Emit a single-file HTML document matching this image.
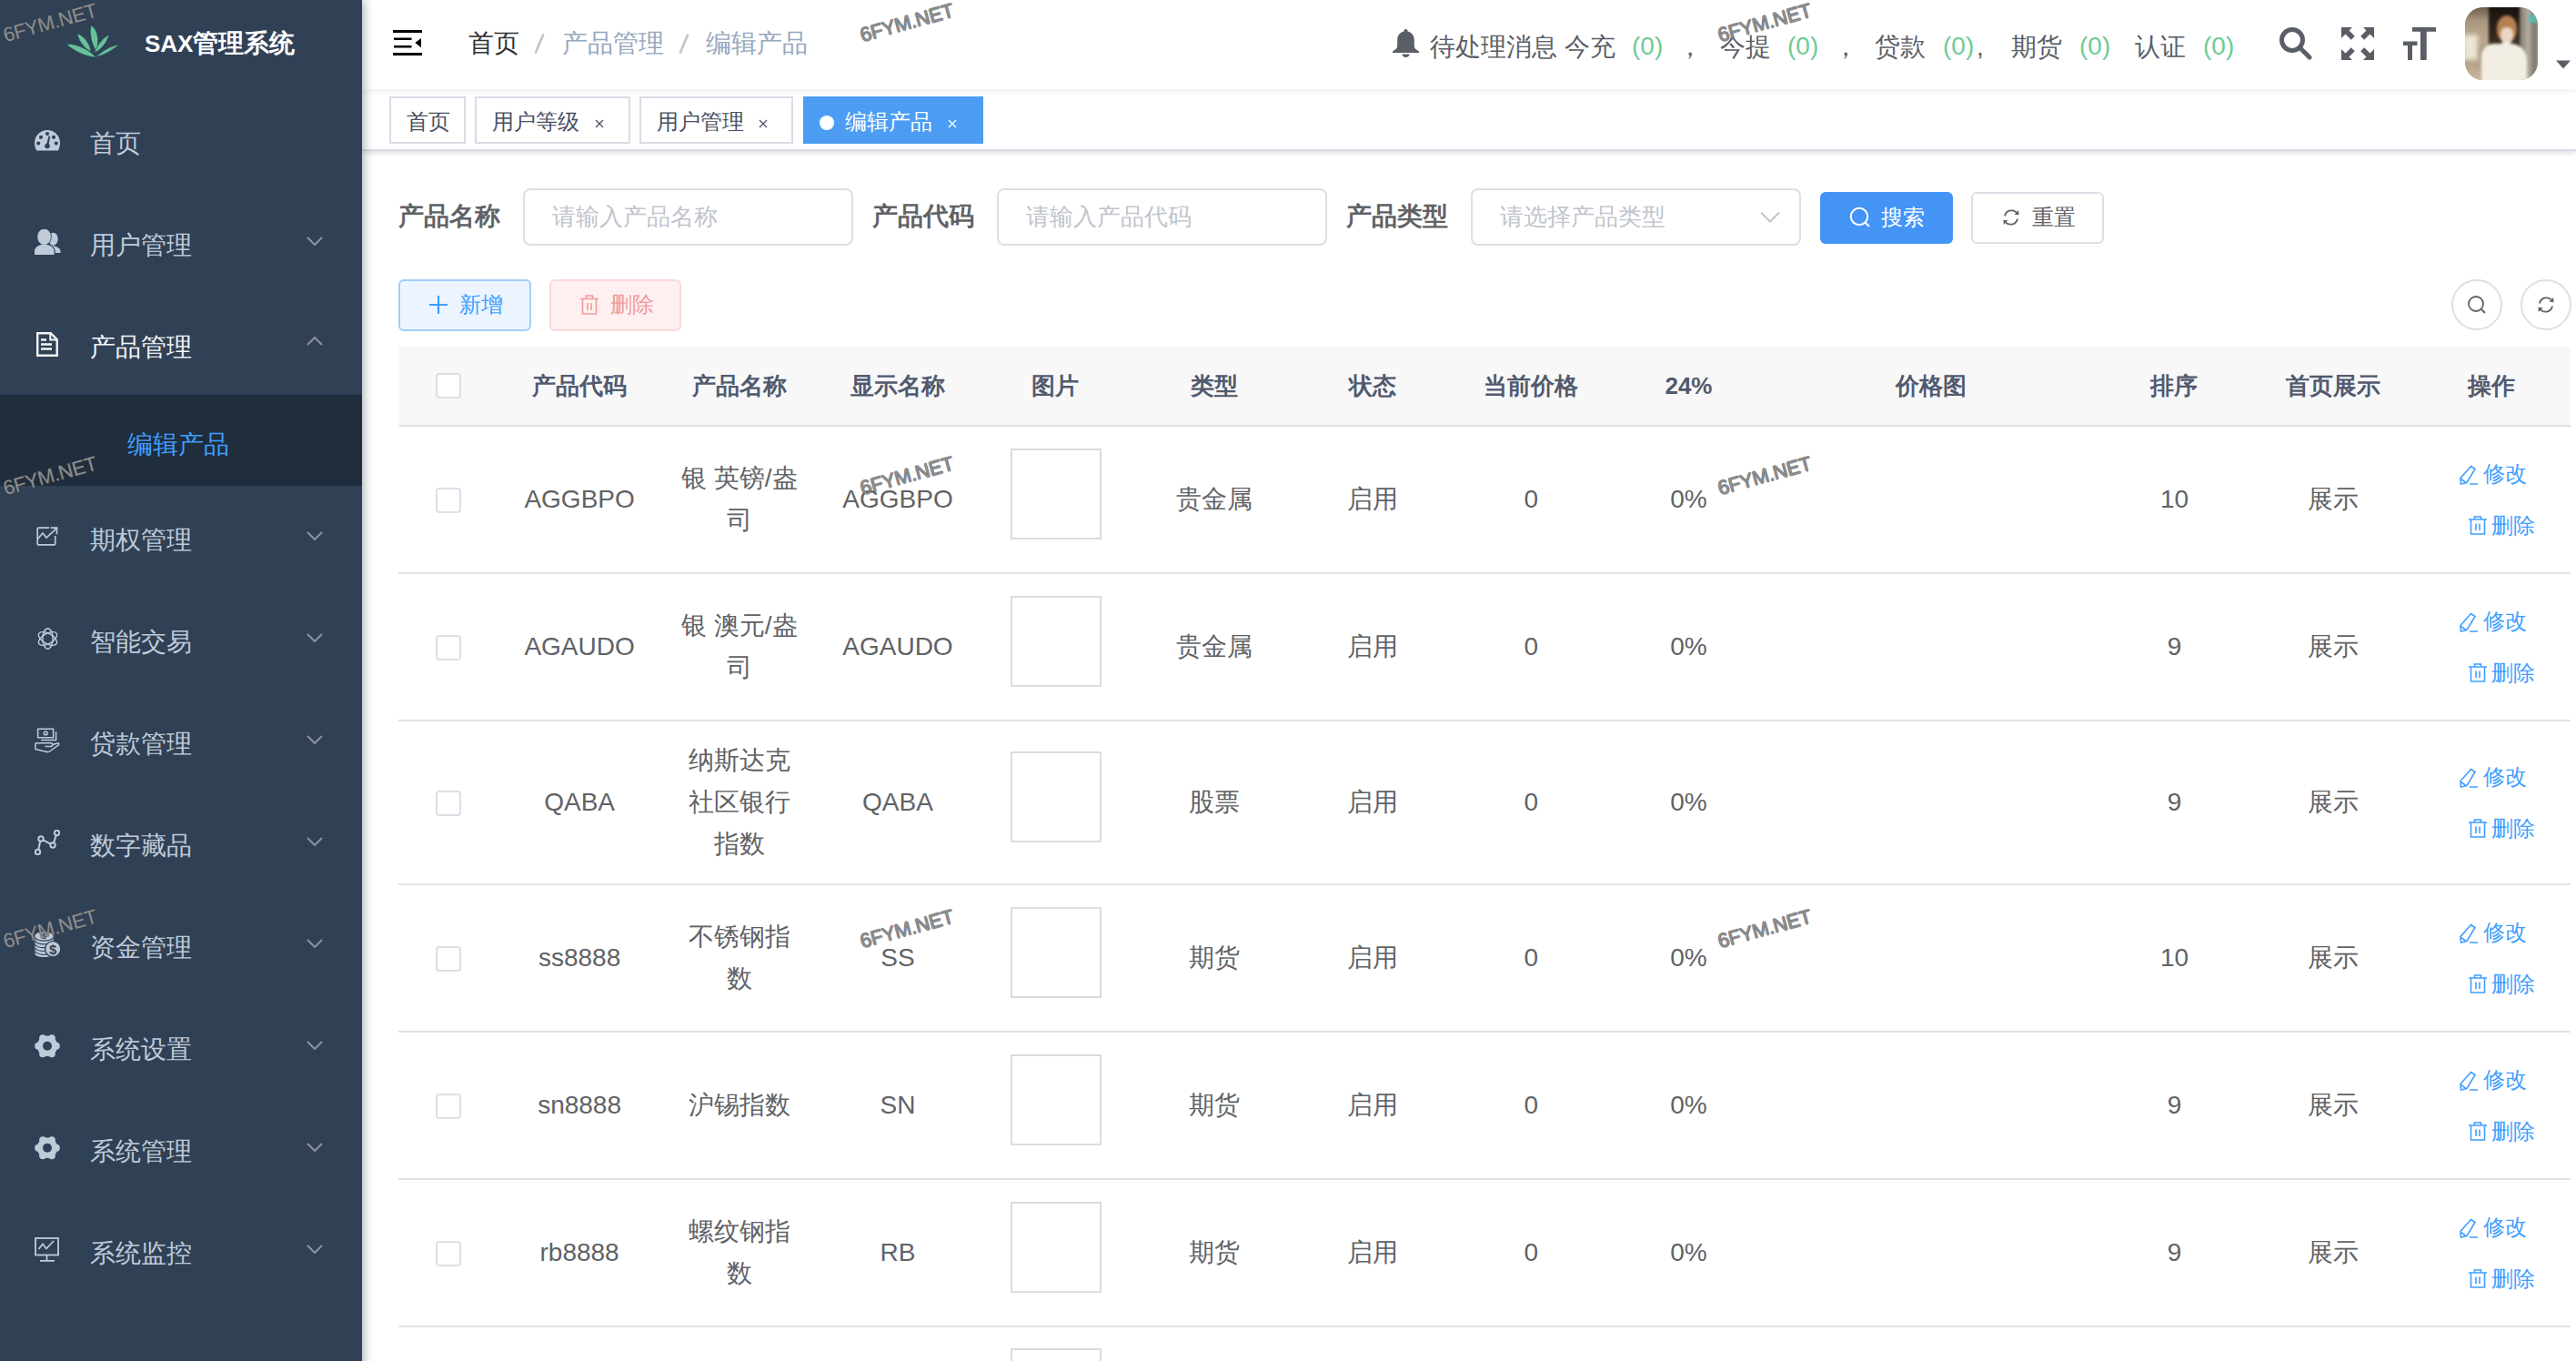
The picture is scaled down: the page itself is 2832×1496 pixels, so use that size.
<!DOCTYPE html>
<html><head><meta charset="utf-8">
<style>
*{box-sizing:border-box;margin:0;padding:0}
html,body{width:2832px;height:1496px;overflow:hidden;background:#fff;font-family:"Liberation Sans",sans-serif;position:relative}
.a{position:absolute;white-space:nowrap}
#side{position:absolute;left:0;top:0;width:398px;height:1650px;background:#304156;z-index:3;box-shadow:3px 0 10px rgba(0,21,41,.3)}
.mi{position:absolute;left:0;width:398px;height:112px}
.mt{position:absolute;left:99px;top:4px;line-height:112px;font-size:28px;color:#bfcbd9}
.ic{position:absolute}
.chev{position:absolute;left:337px;width:18px;height:10px}
#nav{position:absolute;left:398px;top:0;width:2434px;height:98px;background:#fff;box-shadow:0 2px 8px rgba(0,21,41,.08);z-index:2}
#tags{position:absolute;left:398px;top:98px;width:2434px;height:68px;background:#fff;border-bottom:2px solid #d8dce5;box-shadow:0 2px 6px 0 rgba(0,0,0,.12),0 0 6px 0 rgba(0,0,0,.04);z-index:1}
.tag{position:absolute;top:106px;height:52px;border:2px solid #d8dce5;background:#fff;color:#495060;font-size:24px;line-height:48px;padding-left:18px}
.nt{top:32px;font-size:28px;line-height:40px;color:#5a5e66;z-index:4}
.ng{top:31px;font-size:28px;line-height:40px;color:#6fcb93;z-index:4}
.tgt{top:114px;font-size:24px;line-height:40px;z-index:5}
.tgx{top:114px;font-size:24px;line-height:40px;z-index:5}
.lbl{position:absolute;font-size:28px;font-weight:bold;color:#606266;line-height:40px}
.inp{position:absolute;top:207px;height:63px;border:2px solid #dcdfe6;border-radius:8px;background:#fff}
.ph{position:absolute;font-size:26px;color:#c0c4cc;line-height:40px}
.btn{position:absolute;border-radius:6px;font-size:24px;line-height:40px}
.th{position:absolute;top:381px;height:86px;font-size:26px;font-weight:bold;color:#515a6e;text-align:center;line-height:86px}
.td{position:absolute;font-size:28px;color:#606266;text-align:center}
.hl{position:absolute;left:438px;width:2388px;height:2px;background:#e0e2e6}
.cb{position:absolute;width:28px;height:28px;border:2px solid #dcdfe6;border-radius:4px;background:#fff}
.img{position:absolute;width:100px;height:100px;border:2px solid #dcdcdc;background:#fff}
.op{position:absolute;font-size:24px;color:#409eff;line-height:40px}
.wm{position:absolute;font-size:22px;line-height:24px;letter-spacing:-0.4px;color:rgba(150,152,156,.9);text-shadow:.8px 0 0 rgba(70,70,70,.55),-.8px 0 0 rgba(70,70,70,.55),0 .8px 0 rgba(70,70,70,.55),0 -.8px 0 rgba(70,70,70,.55);transform:rotate(-15.5deg);transform-origin:0 0;z-index:10;white-space:nowrap}
</style></head><body>

<!-- SIDEBAR -->
<div id="side">
  <svg class="ic" style="left:73px;top:28px" width="58" height="36" viewBox="0 0 58 36">
    <g fill="#68c19c" stroke="#1f4a44" stroke-width="0.5">
      <path d="M0 20.5C12 19.5 26 27.5 32.5 35C22 34.5 8 28 0 20.5Z"/>
      <path d="M12 9C19.5 11.5 25.5 19.5 27 28.5C20 25.5 14 18 12 9Z"/>
      <path d="M27 0C34.5 4 36.5 16 32.8 28.5C28 20.5 25 9 27 0Z"/>
      <path d="M47 10C44.5 19 38.5 26 31 30C33.5 21.5 40 14 47 10Z"/>
      <path d="M58 21C50.5 27 42 32.5 32.5 34.5C40 27.5 49 22.5 58 21Z"/>
    </g>
  </svg>
  <div class="a" style="left:159px;top:28px;font-size:28px;font-weight:bold;color:#fff;line-height:40px"><span style="font-size:26px">SAX</span>管理系统</div>

  <div class="mi" style="top:98px">
    <svg class="ic" style="left:38px;top:45px" width="28" height="23" viewBox="0 0 28 23">
      <path fill="#bfcbd9" d="M14 0C6.3 0 0 6.3 0 14c0 3.2.8 6 2.2 8.5h23.6c1.4-2.5 2.2-5.3 2.2-8.5C28 6.3 21.7 0 14 0z"/>
      <g fill="#304156"><circle cx="14" cy="4" r="2.1"/><circle cx="7" cy="7.8" r="2.1"/><circle cx="21" cy="7.8" r="2.1"/><circle cx="4.2" cy="14.5" r="2.1"/><circle cx="23.8" cy="14.5" r="2.1"/><circle cx="14" cy="17.5" r="2.8"/><path d="M12.6 17 L15.6 6.5 L17.2 6.9 L15.2 17.6Z"/></g>
    </svg>
    <span class="mt">首页</span>
  </div>
  <div class="mi" style="top:210px">
    <svg class="ic" style="left:38px;top:42px" width="29" height="29" viewBox="0 0 29 29">
      <g fill="#bfcbd9">
        <ellipse cx="20.5" cy="10.8" rx="5.2" ry="7"/>
        <path d="M15 17.8c6.5-.3 13.5 2 13.5 6.5v1.6H18z"/>
        <g stroke="#304156" stroke-width="1.6">
        <ellipse cx="10.6" cy="8.3" rx="7.4" ry="8.6"/>
        <path d="M-0.5 28.5V24.5C-.5 19.8 4.5 16.8 10.8 16.8S22 19.8 22 24.5V28.5z"/>
        </g>
        <ellipse cx="10.6" cy="8.3" rx="7.4" ry="8.6"/>
        <path d="M0 28V24.5C0 19.8 4.5 16.8 10.8 16.8S21.5 19.8 21.5 24.5V28z"/>
      </g>
    </svg>
    <span class="mt">用户管理</span>
    <svg class="chev" style="top:50px" viewBox="0 0 18 10"><path d="M1 1L9 9L17 1" fill="none" stroke="#909399" stroke-width="2"/></svg>
  </div>
  <div class="mi" style="top:322px">
    <svg class="ic" style="left:40px;top:43px" width="24" height="27" viewBox="0 0 24 27">
      <path d="M1.2 1.2h14.5l7 7v17.6H1.2z" fill="none" stroke="#f4f4f5" stroke-width="2.4"/>
      <path d="M15.3 1.2v7.4h7.4" fill="none" stroke="#f4f4f5" stroke-width="2"/>
      <path d="M5 8.5h6M5 13.5h12M5 18.5h12" stroke="#f4f4f5" stroke-width="2.4"/>
    </svg>
    <span class="mt" style="color:#f4f4f5">产品管理</span>
    <svg class="chev" style="top:48px" viewBox="0 0 18 10"><path d="M1 9L9 1L17 9" fill="none" stroke="#909399" stroke-width="2"/></svg>
  </div>
  <div class="a" style="left:0;top:434px;width:398px;height:100px;background:#1f2d3d"></div>
  <div class="a" style="left:140px;top:439px;line-height:100px;font-size:28px;color:#409eff">编辑产品</div>

  <div class="mi" style="top:534px">
    <svg class="ic" style="left:40px;top:45px" width="24" height="21" viewBox="0 0 24 21">
      <path d="M14 1.2H2.2a1 1 0 0 0-1 1v16.6a1 1 0 0 0 1 1h17.5a1 1 0 0 0 1-1V10" fill="none" stroke="#bfcbd9" stroke-width="1.7"/>
      <path d="M1.5 13.5l5.5-6.5 4 5L22 1.8M15.5 1.2h7v7" fill="none" stroke="#bfcbd9" stroke-width="1.7"/>
    </svg>
    <span class="mt">期权管理</span>
    <svg class="chev" style="top:50px" viewBox="0 0 18 10"><path d="M1 1L9 9L17 1" fill="none" stroke="#909399" stroke-width="2"/></svg>
  </div>
  <div class="mi" style="top:646px">
    <svg class="ic" style="left:41px;top:44px" width="23" height="24" viewBox="0 0 23 24">
      <g fill="none" stroke="#bfcbd9" stroke-width="1.4">
        <ellipse cx="11.5" cy="12" rx="5.6" ry="11.2"/>
        <ellipse cx="11.5" cy="12" rx="5.6" ry="11.2" transform="rotate(60 11.5 12)"/>
        <ellipse cx="11.5" cy="12" rx="5.6" ry="11.2" transform="rotate(-60 11.5 12)"/>
      </g>
    </svg>
    <span class="mt">智能交易</span>
    <svg class="chev" style="top:50px" viewBox="0 0 18 10"><path d="M1 1L9 9L17 1" fill="none" stroke="#909399" stroke-width="2"/></svg>
  </div>
  <div class="mi" style="top:758px">
    <svg class="ic" style="left:38px;top:42px" width="28" height="28" viewBox="0 0 28 28">
      <g fill="none" stroke="#bfcbd9" stroke-width="1.5" stroke-linejoin="round">
        <rect x="3.6" y="1.3" width="17" height="9.4"/>
        <circle cx="12.2" cy="5.9" r="1.9"/>
        <path d="M7 13.6h16.6V4.2"/>
        <path d="M1 16.8h17.2c1.9 0 2.3 3.5 0 3.6H11.4"/>
        <path d="M19.4 18.4l6-1.5c1.2-.2 1.8 1 1 1.9L16.5 26c-.9.6-2 .7-3 .4L1 23.6V16.8"/>
      </g>
    </svg>
    <span class="mt">贷款管理</span>
    <svg class="chev" style="top:50px" viewBox="0 0 18 10"><path d="M1 1L9 9L17 1" fill="none" stroke="#909399" stroke-width="2"/></svg>
  </div>
  <div class="mi" style="top:870px">
    <svg class="ic" style="left:38px;top:42px" width="28" height="28" viewBox="0 0 28 28">
      <g fill="none" stroke="#bfcbd9" stroke-width="2">
        <circle cx="24.5" cy="3.5" r="2.7"/><circle cx="7" cy="10" r="2.7"/><circle cx="20" cy="17" r="2.7"/><circle cx="3.5" cy="24.5" r="2.7"/>
        <path d="M23.8 6.2L21 14.3M9.4 11.3l8.2 4.4M6.2 12.7L4.3 21.8"/>
      </g>
    </svg>
    <span class="mt">数字藏品</span>
    <svg class="chev" style="top:50px" viewBox="0 0 18 10"><path d="M1 1L9 9L17 1" fill="none" stroke="#909399" stroke-width="2"/></svg>
  </div>
  <div class="mi" style="top:982px">
    <svg class="ic" style="left:38px;top:42px" width="29" height="28" viewBox="0 0 29 28">
      <path fill="#bfcbd9" d="M0.5 4.6V24.5C0.5 26.6 5 28 10.5 28S20.5 26.6 20.5 24.5V4.6z"/>
      <ellipse cx="10.5" cy="4.6" rx="10" ry="4.4" fill="#bfcbd9"/>
      <g fill="none" stroke="#304156" stroke-width="1.2"><path d="M0.6 6.6C2.2 9.2 6 10.1 10.5 10.1S18.8 9.2 20.4 6.6"/><path d="M0.6 10.4C2.2 13.0 6 13.9 10.5 13.9S18.8 13.0 20.4 10.4"/><path d="M0.6 14.2C2.2 16.8 6 17.7 10.5 17.7S18.8 16.8 20.4 14.2"/><path d="M0.6 18C2.2 20.6 6 21.5 10.5 21.5S18.8 20.6 20.4 18"/><path d="M0.6 21.8C2.2 24.400000000000002 6 25.3 10.5 25.3S18.8 24.400000000000002 20.4 21.8"/></g>
      <text x="10.5" y="7.6" font-size="8.5" font-weight="bold" text-anchor="middle" fill="#304156" font-family="Liberation Sans">$</text>
      <circle cx="20.2" cy="19.2" r="8.6" fill="#bfcbd9" stroke="#304156" stroke-width="1.3"/>
      <text x="20.2" y="24.6" font-size="15" font-weight="bold" text-anchor="middle" fill="#304156" font-family="Liberation Sans">$</text>
    </svg>
    <span class="mt">资金管理</span>
    <svg class="chev" style="top:50px" viewBox="0 0 18 10"><path d="M1 1L9 9L17 1" fill="none" stroke="#909399" stroke-width="2"/></svg>
  </div>
  <div class="mi" style="top:1094px">
    <svg class="ic" style="left:38px;top:42px" width="28" height="28" viewBox="0 0 28 28"><g fill="#bfcbd9"><circle cx="14" cy="13.7" r="11.2"/><circle cx="23.90" cy="13.70" r="3.9"/><circle cx="18.95" cy="22.27" r="3.9"/><circle cx="9.05" cy="22.27" r="3.9"/><circle cx="4.10" cy="13.70" r="3.9"/><circle cx="9.05" cy="5.13" r="3.9"/><circle cx="18.95" cy="5.13" r="3.9"/></g><circle cx="14" cy="13.7" r="5" fill="#304156"/></svg>
    <span class="mt">系统设置</span>
    <svg class="chev" style="top:50px" viewBox="0 0 18 10"><path d="M1 1L9 9L17 1" fill="none" stroke="#909399" stroke-width="2"/></svg>
  </div>
  <div class="mi" style="top:1206px">
    <svg class="ic" style="left:38px;top:42px" width="28" height="28" viewBox="0 0 28 28"><g fill="#bfcbd9"><circle cx="14" cy="13.7" r="11.2"/><circle cx="23.90" cy="13.70" r="3.9"/><circle cx="18.95" cy="22.27" r="3.9"/><circle cx="9.05" cy="22.27" r="3.9"/><circle cx="4.10" cy="13.70" r="3.9"/><circle cx="9.05" cy="5.13" r="3.9"/><circle cx="18.95" cy="5.13" r="3.9"/></g><circle cx="14" cy="13.7" r="5" fill="#304156"/></svg>
    <span class="mt">系统管理</span>
    <svg class="chev" style="top:50px" viewBox="0 0 18 10"><path d="M1 1L9 9L17 1" fill="none" stroke="#909399" stroke-width="2"/></svg>
  </div>
  <div class="mi" style="top:1318px">
    <svg class="ic" style="left:38px;top:42px" width="27" height="27" viewBox="0 0 27 27">
      <g fill="none" stroke="#bfcbd9" stroke-width="1.8">
        <rect x="1" y="1" width="25" height="18.5"/>
        <path d="M4.5 13l4.5-5.5 4 5 8-8.5M13.5 19.5v6M6 25.8h16"/>
      </g>
    </svg>
    <span class="mt">系统监控</span>
    <svg class="chev" style="top:50px" viewBox="0 0 18 10"><path d="M1 1L9 9L17 1" fill="none" stroke="#909399" stroke-width="2"/></svg>
  </div>
</div>

<!-- NAVBAR -->
<div id="nav"></div>
<svg class="a" style="left:432px;top:33px;z-index:4" width="32" height="28" viewBox="0 0 32 28">
  <path d="M0 0h32v3H0zM1 8.4h19.5V11H1zM1 17h19.5v2.6H1zM0 25h32v3H0z" fill="#000"/>
  <path d="M31 9L24.3 14L31 19.3z" fill="#000"/>
</svg>
<div class="a" style="left:515px;top:28px;font-size:28px;line-height:40px;color:#303133;z-index:4">首页</div>
<svg class="a" style="left:586px;top:36px;z-index:4" width="14" height="24" viewBox="0 0 14 24"><path d="M2.6 22.5L11.4 1.5" stroke="#c0c4cc" stroke-width="2.6"/></svg>
<div class="a" style="left:618px;top:28px;font-size:28px;line-height:40px;color:#97a8be;z-index:4">产品管理</div>
<svg class="a" style="left:745px;top:36px;z-index:4" width="14" height="24" viewBox="0 0 14 24"><path d="M2.6 22.5L11.4 1.5" stroke="#c0c4cc" stroke-width="2.6"/></svg>
<div class="a" style="left:776px;top:28px;font-size:28px;line-height:40px;color:#97a8be;z-index:4">编辑产品</div>

<svg class="a" style="left:1531px;top:32px;z-index:4" width="29" height="31" viewBox="0 0 29 31">
  <path fill="#5a5e66" d="M14.5 0c1.2 0 2 .8 2 1.9v.6c4.5 1 7.3 4.6 7.3 9.3v6.8c0 1.9 1.4 3.6 3.3 4.6 1 .5 1.9 1 1.9 1.9V26H0v-.9c0-.9.9-1.4 1.9-1.9 1.9-1 3.3-2.7 3.3-4.6v-6.8c0-4.7 2.8-8.3 7.3-9.3v-.6c0-1.1.8-1.9 2-1.9zM10.3 27.5h8.4c-.3 2.1-2 3.5-4.2 3.5s-3.9-1.4-4.2-3.5z"/>
</svg>
<div class="a nt" style="left:1572px">待处理消息 今充</div>
<div class="a ng" style="left:1794px">(0)</div>
<div class="a nt" style="left:1844px">，</div>
<div class="a nt" style="left:1891px">今提</div>
<div class="a ng" style="left:1965px">(0)</div>
<div class="a nt" style="left:2015px">，</div>
<div class="a nt" style="left:2061px">贷款</div>
<div class="a ng" style="left:2136px">(0)</div>
<div class="a nt" style="left:2173px">,</div>
<div class="a nt" style="left:2211px">期货</div>
<div class="a ng" style="left:2286px">(0)</div>
<div class="a nt" style="left:2347px">认证</div>
<div class="a ng" style="left:2422px">(0)</div>

<svg class="a" style="left:2506px;top:30px;z-index:4" width="36" height="36" viewBox="0 0 36 36">
  <circle cx="14" cy="14" r="11.5" fill="none" stroke="#5a5e66" stroke-width="5"/>
  <path d="M22.5 22.5L33 33" stroke="#5a5e66" stroke-width="5" stroke-linecap="round"/>
</svg>
<svg class="a" style="left:2574px;top:30px;z-index:4" width="36" height="36" viewBox="0 0 36 36">
  <g fill="#5a5e66">
    <path d="M0 0h12L8.5 3.5 14.8 9.8 10.8 13.8 4.5 7.5 0 12z"/>
    <path d="M36 0H24l3.5 3.5-6.3 6.3 4 4 6.3-6.3L36 12z"/>
    <path d="M0 36h12l-3.5-3.5 6.3-6.3-4-4-6.3 6.3L0 24z"/>
    <path d="M36 36H24l3.5-3.5-6.3-6.3 4-4 6.3 6.3L36 24z"/>
  </g>
</svg>
<svg class="a" style="left:2642px;top:30px;z-index:4" width="36" height="36" viewBox="0 0 36 36">
  <g fill="#5a5e66">
    <path d="M10 0h26v4.7H25.7V36H19V4.7H10z"/>
    <path d="M0 15.5h15.5v4.5H10v16H5V20H0z"/>
  </g>
</svg>
<div class="a" style="left:2710px;top:8px;width:80px;height:80px;border-radius:20px;overflow:hidden;z-index:4;background:#a89880">
  <div class="a" style="left:-4px;top:-4px;width:88px;height:88px;filter:blur(1.6px)">
  <div class="a" style="left:0;top:0;width:34px;height:88px;background:linear-gradient(180deg,#5e4e3e 0%,#a89880 22%,#b9a88e 45%,#a8967c 62%,#cdbba2 100%)"></div>
  <div class="a" style="left:2px;top:34px;width:16px;height:28px;background:#ece6d2;filter:blur(2px)"></div>
  <div class="a" style="left:30px;top:0;width:36px;height:54px;background:linear-gradient(180deg,#140f0c,#35291e 70%,#4e4034)"></div>
  <div class="a" style="left:64px;top:0;width:24px;height:88px;background:linear-gradient(90deg,#7f786c,#b6b0a2 40%,#77716a 70%,#c6c0ae)"></div>
  <div class="a" style="left:74px;top:12px;width:9px;height:9px;background:#5fb8b0"></div>
  <div class="a" style="left:39px;top:13px;width:22px;height:28px;border-radius:50% 50% 40% 40%;background:#b58050"></div>
  <div class="a" style="left:43px;top:26px;width:14px;height:19px;border-radius:40% 40% 50% 50%;background:#ecd6c6"></div>
  <div class="a" style="left:22px;top:44px;width:50px;height:48px;border-radius:14px 18px 0 0;background:#f2eee4"></div>
  <div class="a" style="left:44px;top:42px;width:10px;height:8px;border-radius:40%;background:#f4ece6"></div>
  </div>
</div>
<svg class="a" style="left:2810px;top:66px;z-index:4" width="16" height="10" viewBox="0 0 16 10"><path d="M0 0.5h16L8 9.5z" fill="#5a5e66"/></svg>

<div id="tags"></div>
<div class="tag" style="left:428px;width:84px;z-index:4"></div>
<div class="a tgt" style="left:447px;color:#495060">首页</div>
<div class="tag" style="left:522px;width:171px;z-index:4"></div>
<div class="a tgt" style="left:541px;color:#495060">用户等级</div>
<svg class="a" style="left:654px;top:131px;z-index:5" width="10" height="10" viewBox="0 0 10 10"><path d="M1 1L9 9M9 1L1 9" stroke="#495060" stroke-width="1.3"/></svg>
<div class="tag" style="left:703px;width:169px;z-index:4"></div>
<div class="a tgt" style="left:722px;color:#495060">用户管理</div>
<svg class="a" style="left:834px;top:131px;z-index:5" width="10" height="10" viewBox="0 0 10 10"><path d="M1 1L9 9M9 1L1 9" stroke="#495060" stroke-width="1.3"/></svg>
<div class="tag" style="left:883px;width:198px;z-index:4;background:#4c9cf3;border-color:#4c9cf3"></div>
<div class="a" style="left:901px;top:127px;width:16px;height:16px;border-radius:50%;background:#fff;z-index:5"></div>
<div class="a tgt" style="left:929px;color:#fff">编辑产品</div>
<svg class="a" style="left:1042px;top:131px;z-index:5" width="10" height="10" viewBox="0 0 10 10"><path d="M1 1L9 9M9 1L1 9" stroke="#fff" stroke-width="1.3"/></svg>

<!--CONTENT-->
<div class="lbl" style="left:438px;top:218px">产品名称</div>
<div class="inp" style="left:575px;width:363px"></div>
<div class="ph" style="left:607px;top:218px">请输入产品名称</div>
<div class="lbl" style="left:959px;top:218px">产品代码</div>
<div class="inp" style="left:1096px;width:363px"></div>
<div class="ph" style="left:1128px;top:218px">请输入产品代码</div>
<div class="lbl" style="left:1480px;top:218px">产品类型</div>
<div class="inp" style="left:1617px;width:363px"></div>
<div class="ph" style="left:1649px;top:218px">请选择产品类型</div>
<svg class="a" style="left:1935px;top:232px" width="22" height="13" viewBox="0 0 22 13"><path d="M1 1.5L11 11.5L21 1.5" fill="none" stroke="#c0c4cc" stroke-width="2"/></svg>
<div class="btn" style="left:2001px;top:211px;width:146px;height:57px;background:#4494f6"></div>
<svg class="a" style="left:2033px;top:227px" width="24" height="24" viewBox="0 0 24 24"><circle cx="11" cy="11" r="9.2" fill="none" stroke="#fff" stroke-width="2"/><path d="M17.5 17.5L22 22" stroke="#fff" stroke-width="2"/></svg>
<div class="a" style="left:2068px;top:219px;font-size:24px;line-height:40px;color:#fff">搜索</div>
<div class="btn" style="left:2167px;top:211px;width:146px;height:57px;border:2px solid #dcdfe6;background:#fff"></div>
<svg class="a" style="left:2201px;top:229px" width="20" height="20" viewBox="0 0 20 20"><g fill="none" stroke="#606266" stroke-width="1.8"><path d="M3 8.5A7.5 7.5 0 0 1 16.8 6"/><path d="M17 11.5A7.5 7.5 0 0 1 3.2 14"/></g><path d="M13.5 6.8L18.5 7.2 18.2 2z" fill="#606266"/><path d="M6.5 13.2L1.5 12.8 1.8 18z" fill="#606266"/></svg>
<div class="a" style="left:2234px;top:219px;font-size:24px;line-height:40px;color:#606266">重置</div>
<div class="btn" style="left:438px;top:307px;width:146px;height:57px;border:2px solid #a3cdf8;background:#ecf5ff"></div>
<svg class="a" style="left:472px;top:325px" width="20" height="20" viewBox="0 0 20 20"><path d="M10 0v20M0 10h20" stroke="#409eff" stroke-width="2.2"/></svg>
<div class="a" style="left:505px;top:315px;font-size:24px;line-height:40px;color:#409eff">新增</div>
<div class="btn" style="left:604px;top:307px;width:145px;height:57px;border:2px solid #fbd9d9;background:#fef0f0"></div>
<svg class="a" style="left:638px;top:324px" width="20" height="22" viewBox="0 0 20 22"><g fill="none" stroke="#f09a9a" stroke-width="1.6"><path d="M0 4.5h20M6.5 4.5V1h7v3.5M2.5 4.5v16.5h15V4.5M8 9v8M12 9v8"/></g></svg>
<div class="a" style="left:671px;top:315px;font-size:24px;line-height:40px;color:#f09a9a">删除</div>
<div class="a" style="left:2695px;top:307px;width:56px;height:56px;border:2px solid #dcdfe6;border-radius:50%;background:#fff"></div>
<svg class="a" style="left:2712px;top:324px" width="22" height="22" viewBox="0 0 22 22"><circle cx="10" cy="10" r="8" fill="none" stroke="#606266" stroke-width="1.8"/><path d="M15.5 15.5L20 20" stroke="#606266" stroke-width="1.8"/></svg>
<div class="a" style="left:2771px;top:307px;width:56px;height:56px;border:2px solid #dcdfe6;border-radius:50%;background:#fff"></div>
<svg class="a" style="left:2789px;top:325px" width="20" height="20" viewBox="0 0 20 20"><g fill="none" stroke="#606266" stroke-width="1.8"><path d="M3 8.5A7.5 7.5 0 0 1 16.8 6"/><path d="M17 11.5A7.5 7.5 0 0 1 3.2 14"/></g><path d="M13.5 6.8L18.5 7.2 18.2 2z" fill="#606266"/><path d="M6.5 13.2L1.5 12.8 1.8 18z" fill="#606266"/></svg>
<div class="a" style="left:438px;top:381px;width:2388px;height:86px;background:#f8f8f9"></div>
<div class="th" style="left:550.0px;width:174.2px">产品代码</div>
<div class="th" style="left:725.7px;width:174.2px">产品名称</div>
<div class="th" style="left:899.9px;width:174.2px">显示名称</div>
<div class="th" style="left:1072.6px;width:174.2px">图片</div>
<div class="th" style="left:1247.8px;width:174.2px">类型</div>
<div class="th" style="left:1422.0px;width:174.2px">状态</div>
<div class="th" style="left:1596.2px;width:174.2px">当前价格</div>
<div class="th" style="left:1769.4px;width:174.2px">24%</div>
<div class="th" style="left:1943.6px;width:359.8px">价格图</div>
<div class="th" style="left:2303.4px;width:174.2px">排序</div>
<div class="th" style="left:2477.6px;width:174.2px">首页展示</div>
<div class="th" style="left:2651.8px;width:174.2px">操作</div>
<div class="cb" style="left:479px;top:410px"></div>
<div class="hl" style="top:467.0px"></div>
<div class="hl" style="top:629.0px"></div>
<div class="hl" style="top:791.0px"></div>
<div class="hl" style="top:971.0px"></div>
<div class="hl" style="top:1133.0px"></div>
<div class="hl" style="top:1295.0px"></div>
<div class="hl" style="top:1457.0px"></div>
<div class="cb" style="left:479px;top:536.0px"></div>
<div class="td" style="left:550.0px;width:174.2px;top:526.0px;line-height:46px">AGGBPO</div>
<div class="td" style="left:725.7px;width:174.2px;top:503.0px;line-height:46px">银 英镑/盎<br>司</div>
<div class="td" style="left:899.9px;width:174.2px;top:526.0px;line-height:46px">AGGBPO</div>
<div class="img" style="left:1110.7px;top:493.0px"></div>
<div class="td" style="left:1247.8px;width:174.2px;top:526.0px;line-height:46px">贵金属</div>
<div class="td" style="left:1422.0px;width:174.2px;top:526.0px;line-height:46px">启用</div>
<div class="td" style="left:1596.2px;width:174.2px;top:526.0px;line-height:46px">0</div>
<div class="td" style="left:1769.4px;width:174.2px;top:526.0px;line-height:46px">0%</div>
<div class="td" style="left:2303.4px;width:174.2px;top:526.0px;line-height:46px">10</div>
<div class="td" style="left:2477.6px;width:174.2px;top:526.0px;line-height:46px">展示</div>
<svg class="a" style="left:2704px;top:510.5px" width="21" height="22" viewBox="0 0 21 22"><g fill="none" stroke="#409eff" stroke-width="1.6"><path d="M12.5 1.5l4.5 3L8 19.5 1.5 21 1 14.5z"/><path d="M1.5 15.5l5.5 3.8M11 21h9"/></g></svg>
<div class="op" style="left:2730px;top:500.7px">修改</div>
<svg class="a" style="left:2714px;top:567.0px" width="20" height="21" viewBox="0 0 20 21"><g fill="none" stroke="#409eff" stroke-width="1.6"><path d="M0 4h20M6.5 4V1h7v3M2.5 4v16h15V4M8 8.5v7.5M12 8.5v7.5"/></g></svg>
<div class="op" style="left:2739px;top:558.0px">删除</div>
<div class="cb" style="left:479px;top:698.0px"></div>
<div class="td" style="left:550.0px;width:174.2px;top:688.0px;line-height:46px">AGAUDO</div>
<div class="td" style="left:725.7px;width:174.2px;top:665.0px;line-height:46px">银 澳元/盎<br>司</div>
<div class="td" style="left:899.9px;width:174.2px;top:688.0px;line-height:46px">AGAUDO</div>
<div class="img" style="left:1110.7px;top:655.0px"></div>
<div class="td" style="left:1247.8px;width:174.2px;top:688.0px;line-height:46px">贵金属</div>
<div class="td" style="left:1422.0px;width:174.2px;top:688.0px;line-height:46px">启用</div>
<div class="td" style="left:1596.2px;width:174.2px;top:688.0px;line-height:46px">0</div>
<div class="td" style="left:1769.4px;width:174.2px;top:688.0px;line-height:46px">0%</div>
<div class="td" style="left:2303.4px;width:174.2px;top:688.0px;line-height:46px">9</div>
<div class="td" style="left:2477.6px;width:174.2px;top:688.0px;line-height:46px">展示</div>
<svg class="a" style="left:2704px;top:672.5px" width="21" height="22" viewBox="0 0 21 22"><g fill="none" stroke="#409eff" stroke-width="1.6"><path d="M12.5 1.5l4.5 3L8 19.5 1.5 21 1 14.5z"/><path d="M1.5 15.5l5.5 3.8M11 21h9"/></g></svg>
<div class="op" style="left:2730px;top:662.7px">修改</div>
<svg class="a" style="left:2714px;top:729.0px" width="20" height="21" viewBox="0 0 20 21"><g fill="none" stroke="#409eff" stroke-width="1.6"><path d="M0 4h20M6.5 4V1h7v3M2.5 4v16h15V4M8 8.5v7.5M12 8.5v7.5"/></g></svg>
<div class="op" style="left:2739px;top:720.0px">删除</div>
<div class="cb" style="left:479px;top:869.0px"></div>
<div class="td" style="left:550.0px;width:174.2px;top:859.0px;line-height:46px">QABA</div>
<div class="td" style="left:725.7px;width:174.2px;top:813.0px;line-height:46px">纳斯达克<br>社区银行<br>指数</div>
<div class="td" style="left:899.9px;width:174.2px;top:859.0px;line-height:46px">QABA</div>
<div class="img" style="left:1110.7px;top:826.0px"></div>
<div class="td" style="left:1247.8px;width:174.2px;top:859.0px;line-height:46px">股票</div>
<div class="td" style="left:1422.0px;width:174.2px;top:859.0px;line-height:46px">启用</div>
<div class="td" style="left:1596.2px;width:174.2px;top:859.0px;line-height:46px">0</div>
<div class="td" style="left:1769.4px;width:174.2px;top:859.0px;line-height:46px">0%</div>
<div class="td" style="left:2303.4px;width:174.2px;top:859.0px;line-height:46px">9</div>
<div class="td" style="left:2477.6px;width:174.2px;top:859.0px;line-height:46px">展示</div>
<svg class="a" style="left:2704px;top:843.5px" width="21" height="22" viewBox="0 0 21 22"><g fill="none" stroke="#409eff" stroke-width="1.6"><path d="M12.5 1.5l4.5 3L8 19.5 1.5 21 1 14.5z"/><path d="M1.5 15.5l5.5 3.8M11 21h9"/></g></svg>
<div class="op" style="left:2730px;top:833.7px">修改</div>
<svg class="a" style="left:2714px;top:900.0px" width="20" height="21" viewBox="0 0 20 21"><g fill="none" stroke="#409eff" stroke-width="1.6"><path d="M0 4h20M6.5 4V1h7v3M2.5 4v16h15V4M8 8.5v7.5M12 8.5v7.5"/></g></svg>
<div class="op" style="left:2739px;top:891.0px">删除</div>
<div class="cb" style="left:479px;top:1040.0px"></div>
<div class="td" style="left:550.0px;width:174.2px;top:1030.0px;line-height:46px">ss8888</div>
<div class="td" style="left:725.7px;width:174.2px;top:1007.0px;line-height:46px">不锈钢指<br>数</div>
<div class="td" style="left:899.9px;width:174.2px;top:1030.0px;line-height:46px">SS</div>
<div class="img" style="left:1110.7px;top:997.0px"></div>
<div class="td" style="left:1247.8px;width:174.2px;top:1030.0px;line-height:46px">期货</div>
<div class="td" style="left:1422.0px;width:174.2px;top:1030.0px;line-height:46px">启用</div>
<div class="td" style="left:1596.2px;width:174.2px;top:1030.0px;line-height:46px">0</div>
<div class="td" style="left:1769.4px;width:174.2px;top:1030.0px;line-height:46px">0%</div>
<div class="td" style="left:2303.4px;width:174.2px;top:1030.0px;line-height:46px">10</div>
<div class="td" style="left:2477.6px;width:174.2px;top:1030.0px;line-height:46px">展示</div>
<svg class="a" style="left:2704px;top:1014.5px" width="21" height="22" viewBox="0 0 21 22"><g fill="none" stroke="#409eff" stroke-width="1.6"><path d="M12.5 1.5l4.5 3L8 19.5 1.5 21 1 14.5z"/><path d="M1.5 15.5l5.5 3.8M11 21h9"/></g></svg>
<div class="op" style="left:2730px;top:1004.7px">修改</div>
<svg class="a" style="left:2714px;top:1071.0px" width="20" height="21" viewBox="0 0 20 21"><g fill="none" stroke="#409eff" stroke-width="1.6"><path d="M0 4h20M6.5 4V1h7v3M2.5 4v16h15V4M8 8.5v7.5M12 8.5v7.5"/></g></svg>
<div class="op" style="left:2739px;top:1062.0px">删除</div>
<div class="cb" style="left:479px;top:1202.0px"></div>
<div class="td" style="left:550.0px;width:174.2px;top:1192.0px;line-height:46px">sn8888</div>
<div class="td" style="left:725.7px;width:174.2px;top:1192.0px;line-height:46px">沪锡指数</div>
<div class="td" style="left:899.9px;width:174.2px;top:1192.0px;line-height:46px">SN</div>
<div class="img" style="left:1110.7px;top:1159.0px"></div>
<div class="td" style="left:1247.8px;width:174.2px;top:1192.0px;line-height:46px">期货</div>
<div class="td" style="left:1422.0px;width:174.2px;top:1192.0px;line-height:46px">启用</div>
<div class="td" style="left:1596.2px;width:174.2px;top:1192.0px;line-height:46px">0</div>
<div class="td" style="left:1769.4px;width:174.2px;top:1192.0px;line-height:46px">0%</div>
<div class="td" style="left:2303.4px;width:174.2px;top:1192.0px;line-height:46px">9</div>
<div class="td" style="left:2477.6px;width:174.2px;top:1192.0px;line-height:46px">展示</div>
<svg class="a" style="left:2704px;top:1176.5px" width="21" height="22" viewBox="0 0 21 22"><g fill="none" stroke="#409eff" stroke-width="1.6"><path d="M12.5 1.5l4.5 3L8 19.5 1.5 21 1 14.5z"/><path d="M1.5 15.5l5.5 3.8M11 21h9"/></g></svg>
<div class="op" style="left:2730px;top:1166.7px">修改</div>
<svg class="a" style="left:2714px;top:1233.0px" width="20" height="21" viewBox="0 0 20 21"><g fill="none" stroke="#409eff" stroke-width="1.6"><path d="M0 4h20M6.5 4V1h7v3M2.5 4v16h15V4M8 8.5v7.5M12 8.5v7.5"/></g></svg>
<div class="op" style="left:2739px;top:1224.0px">删除</div>
<div class="cb" style="left:479px;top:1364.0px"></div>
<div class="td" style="left:550.0px;width:174.2px;top:1354.0px;line-height:46px">rb8888</div>
<div class="td" style="left:725.7px;width:174.2px;top:1331.0px;line-height:46px">螺纹钢指<br>数</div>
<div class="td" style="left:899.9px;width:174.2px;top:1354.0px;line-height:46px">RB</div>
<div class="img" style="left:1110.7px;top:1321.0px"></div>
<div class="td" style="left:1247.8px;width:174.2px;top:1354.0px;line-height:46px">期货</div>
<div class="td" style="left:1422.0px;width:174.2px;top:1354.0px;line-height:46px">启用</div>
<div class="td" style="left:1596.2px;width:174.2px;top:1354.0px;line-height:46px">0</div>
<div class="td" style="left:1769.4px;width:174.2px;top:1354.0px;line-height:46px">0%</div>
<div class="td" style="left:2303.4px;width:174.2px;top:1354.0px;line-height:46px">9</div>
<div class="td" style="left:2477.6px;width:174.2px;top:1354.0px;line-height:46px">展示</div>
<svg class="a" style="left:2704px;top:1338.5px" width="21" height="22" viewBox="0 0 21 22"><g fill="none" stroke="#409eff" stroke-width="1.6"><path d="M12.5 1.5l4.5 3L8 19.5 1.5 21 1 14.5z"/><path d="M1.5 15.5l5.5 3.8M11 21h9"/></g></svg>
<div class="op" style="left:2730px;top:1328.7px">修改</div>
<svg class="a" style="left:2714px;top:1395.0px" width="20" height="21" viewBox="0 0 20 21"><g fill="none" stroke="#409eff" stroke-width="1.6"><path d="M0 4h20M6.5 4V1h7v3M2.5 4v16h15V4M8 8.5v7.5M12 8.5v7.5"/></g></svg>
<div class="op" style="left:2739px;top:1386.0px">删除</div>
<div class="img" style="left:1110.7px;top:1482px"></div>
<!--WM-->
<div class="wm" style="left:1px;top:28px">6FYM.NET</div>
<div class="wm" style="left:943px;top:28px">6FYM.NET</div>
<div class="wm" style="left:1886px;top:28px">6FYM.NET</div>
<div class="wm" style="left:1px;top:526px">6FYM.NET</div>
<div class="wm" style="left:943px;top:526px">6FYM.NET</div>
<div class="wm" style="left:1886px;top:526px">6FYM.NET</div>
<div class="wm" style="left:1px;top:1024px">6FYM.NET</div>
<div class="wm" style="left:943px;top:1024px">6FYM.NET</div>
<div class="wm" style="left:1886px;top:1024px">6FYM.NET</div>
</body></html>
